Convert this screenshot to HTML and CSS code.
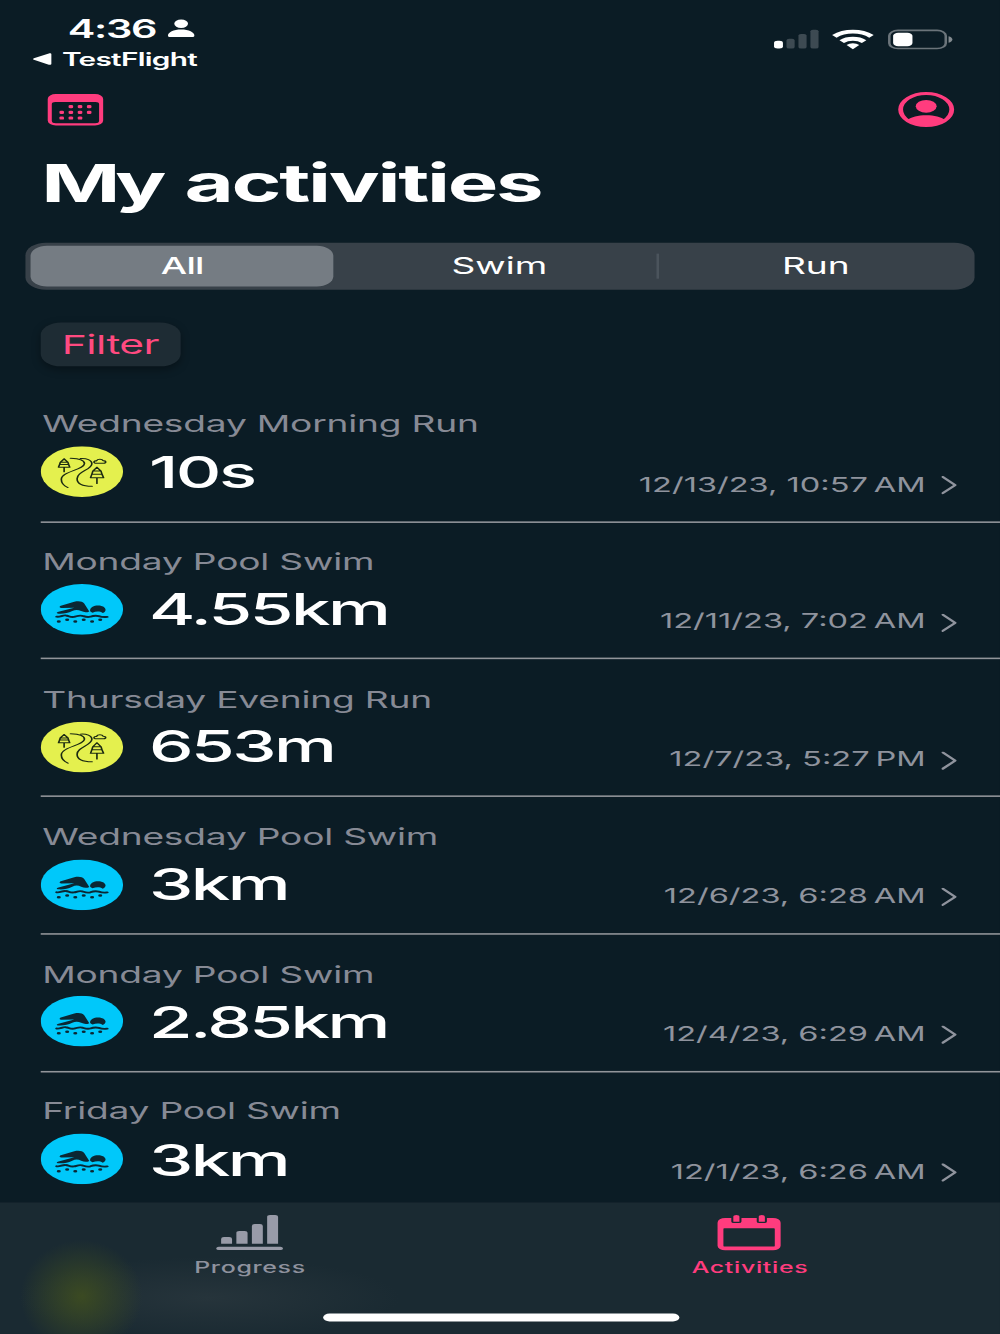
FILE: index.html
```html
<!DOCTYPE html>
<html lang="en">
<head>
    <meta charset="UTF-8">
    <meta name="viewport" content="width=device-width, initial-scale=1.0">
    <title>My activities</title>
    <link rel="stylesheet" href="styles.css">
</head>
<body>
    <!-- Shared activity icons -->
    <svg class="sprites" width="0" height="0">
        <symbol id="run" viewBox="0 0 32.4 32.4">
            <circle cx="16.2" cy="16.2" r="16.2" fill="#e4f04e"/>
            <g fill="none" stroke="#1b2a12" stroke-width=".65" stroke-linecap="round" stroke-linejoin="round">
                <path d="M9.2 8.1 7.7 10.3h3L9.2 8.1M7.7 10.3l-.3 1.4h3.6l-.3-1.4M7.4 11.7 7 13.4h4.4L11 11.7M9.2 13.4v2.9"/>
                <path d="M22.1 13.4 20.5 15.9h3.2L22.1 13.4M20.5 15.9l-.4 2h4l-.4-2M20.1 17.9l-.5 2.2h5.1l-.6-2.2M22.1 20.1v3.7"/>
                <path d="M11.7 7.7C14.5 7.9 17.3 8.7 17.2 11.2 17 15 8.1 16.2 8.1 21.2c0 2.3 1.2 4.2 2.6 5.2"/>
                <path d="M15.6 7.9c2.3-.3 4.6.9 4.5 3.4-.2 3.7-5.8 5-5.8 9.5 0 3.6 2.6 4.8 5.9 4.8"/>
                <path d="M21.3 10.8c-.8-.6-.2-1.6.6-1.4.5-1.5 2.3-1.3 2.6-.2 1.4 0 1.3 1.6.2 1.7z"/>
            </g>
        </symbol>
        <symbol id="swim" viewBox="0 0 32.4 32.4">
            <circle cx="16.2" cy="16.2" r="16.2" fill="#00c8fa"/>
            <g fill="#0b2733">
                <path d="M7.9 13.9 13.2 11.3c1.7-.6 3.2-.3 3.9 1.1l2 5.1c-1.1.9-2.1.6-3.2-.2-1.2-.9-2.3-.9-3.5 0-1.7 1.4-3.5 1.9-5.4 1.7-1-.2-.8-.8 0-1.2l6.2-2.6-4.8.1c-1 0-1.3-.9-.5-1.4z"/>
                <path d="M19.4 16.9c.1-2 1.5-3.1 3.1-3.1s2.9 1 3 2.6c0 1-.4 1.8-1.1 2.2-1.2-1.3-2.7-1.2-4-.2-.6-.4-1-.9-1-1.5z"/>
                <circle cx="7.1" cy="24" r=".8"/><circle cx="10.4" cy="22.9" r=".8"/>
                <circle cx="13.6" cy="24" r=".8"/><circle cx="16.9" cy="22.9" r=".8"/>
                <circle cx="20.2" cy="24" r=".8"/><circle cx="23.4" cy="22.9" r=".8"/>
            </g>
            <path d="M6.3 20.9c1.4.4 2.3-1.2 3.6-.8 1.2.3 1.7 1.3 3.2.9 1.2-.4 1.8-1.2 3.2-.7 1.2.6 1.9 1.2 3.2.6 1.2-.7 2-1 3.3-.4 1.1.6 1.9.8 3.3.5" fill="none" stroke="#0b2733" stroke-width="1.2" stroke-linecap="round"/>
        </symbol>
        <symbol id="chevron" viewBox="0 0 6 12">
            <path d="M.5.6 5.4 5.8 .5 11" fill="none" stroke="#8f939d" stroke-width="1.2" stroke-linecap="round" stroke-linejoin="round"/>
        </symbol>
    </svg>

    <div class="phone">
        <div class="status">
            <div class="status-left">
                <div class="time">
                    <span>4:36</span>
                    <svg width="10.4" height="11.2" viewBox="0 0 10.4 11.2" fill="#fff">
                        <circle cx="5.2" cy="2.2" r="2.7"/>
                        <path d="M0 9.7C0 7.5 2.2 5.8 5.2 5.8s5.2 1.7 5.2 3.9c0 .6-.3 1-1 1H1c-.7 0-1-.4-1-1z"/>
                    </svg>
                </div>
                <div class="back">
                    <svg width="7.2" height="7.4" viewBox="0 0 7.2 7.4" fill="#fff"><path d="M.3 3.2 6.2.1c.6-.3 1 0 1 .5v6.2c0 .5-.4.8-1 .5L.3 4.2c-.4-.3-.4-.7 0-1z"/></svg>
                    <span>TestFlight</span>
                </div>
            </div>
            <div class="status-right">
                <svg width="17.6" height="12" viewBox="0 0 17.6 12">
                    <rect x=".2" y="7" width="3.5" height="5" rx="1.4" fill="#fff"/>
                    <g fill="#3d4a52">
                        <rect x="5.1" y="5.8" width="3.2" height="6.2" rx="1"/>
                        <rect x="9.8" y="2.7" width="3.2" height="9.3" rx="1"/>
                        <rect x="14.5" y="0" width="3.2" height="12" rx="1"/>
                    </g>
                </svg>
                <svg width="16.4" height="12.6" viewBox="0 0 16.4 12.6">
                    <g fill="none" stroke="#fff" stroke-width="2.5">
                        <path d="M.9 4.2a10.4 10.4 0 0 1 14.6 0"/>
                        <path d="M3.8 7.6a6.2 6.2 0 0 1 8.8 0"/>
                    </g>
                    <path d="M5.7 9.7a3.6 3.6 0 0 1 5 0L8.2 12.4z" fill="#fff"/>
                </svg>
                <svg width="25.4" height="12.6" viewBox="0 0 25.4 12.6">
                    <rect x=".5" y=".4" width="22.2" height="11.6" rx="3.4" fill="none" stroke="#6b747a"/>
                    <rect x="2" y="1.9" width="7.6" height="8.6" rx="2" fill="#fff"/>
                    <path d="M23.8 4.1c.9.3 1.5 1.1 1.5 2.1s-.6 1.8-1.5 2.1z" fill="#848b90"/>
                </svg>
            </div>
        </div>

        <div class="toolbar">
            <svg width="21.8" height="20.2" viewBox="0.25 0 21.8 20.2" fill="#ff3c7e">
                <path fill-rule="evenodd" d="M3.2 0h15.4a3.2 3.2 0 0 1 3.2 3.2V17a3.2 3.2 0 0 1-3.2 3.2H3.2A3.2 3.2 0 0 1 0 17V3.2A3.2 3.2 0 0 1 3.2 0zM3 5.1a1.4 1.4 0 0 0-1.4 1.4v10.6A1.6 1.6 0 0 0 3.2 18.7h15.4a1.6 1.6 0 0 0 1.6-1.6V6.5a1.4 1.4 0 0 0-1.4-1.4z"/>
                <rect x="8.2" y="7.1" width="1.8" height="2" rx=".6"/><rect x="11.8" y="7.1" width="1.8" height="2" rx=".6"/><rect x="15.4" y="7.1" width="1.8" height="2" rx=".6"/>
                <rect x="4.6" y="10.8" width="1.8" height="2" rx=".6"/><rect x="8.2" y="10.8" width="1.8" height="2" rx=".6"/><rect x="11.8" y="10.8" width="1.8" height="2" rx=".6"/><rect x="15.4" y="10.8" width="1.8" height="2" rx=".6"/>
                <rect x="4.6" y="14.4" width="1.8" height="2" rx=".6"/><rect x="8.2" y="14.4" width="1.8" height="2" rx=".6"/><rect x="11.8" y="14.4" width="1.8" height="2" rx=".6"/>
            </svg>
            <svg width="22.2" height="22.4" viewBox="0 0 22.2 22.4">
                <ellipse cx="11" cy="11" rx="10.05" ry="10.25" fill="none" stroke="#ff3c7e" stroke-width="1.9"/>
                <circle cx="11" cy="8.9" r="4.1" fill="#ff3c7e"/>
                <path d="M3.5 17.7c1.6-1.9 4.3-3.1 7.5-3.1s5.9 1.2 7.5 3.1c-1.8 2.4-4.5 3.8-7.5 3.8s-5.7-1.4-7.5-3.8z" fill="#ff3c7e"/>
            </svg>
        </div>

        <h1>My activities</h1>

        <div class="segments">
            <div class="segment active">All</div>
            <div class="segment">Swim</div>
            <div class="segment last">Run</div>
        </div>

        <button class="filter">Filter</button>

        <div class="list">
            <div class="row">
                <div class="name">Wednesday Morning Run</div>
                <div class="info">
                    <svg class="badge"><use href="#run"/></svg>
                    <span class="value">10s</span>
                    <span class="date">12/13/23, 10:57&#8239;AM</span>
                    <svg class="chevron"><use href="#chevron"/></svg>
                </div>
            </div>
            <div class="row">
                <div class="name">Monday Pool Swim</div>
                <div class="info">
                    <svg class="badge"><use href="#swim"/></svg>
                    <span class="value">4.55km</span>
                    <span class="date">12/11/23, 7:02&#8239;AM</span>
                    <svg class="chevron"><use href="#chevron"/></svg>
                </div>
            </div>
            <div class="row">
                <div class="name">Thursday Evening Run</div>
                <div class="info">
                    <svg class="badge"><use href="#run"/></svg>
                    <span class="value">653m</span>
                    <span class="date">12/7/23, 5:27&#8239;PM</span>
                    <svg class="chevron"><use href="#chevron"/></svg>
                </div>
            </div>
            <div class="row">
                <div class="name">Wednesday Pool Swim</div>
                <div class="info">
                    <svg class="badge"><use href="#swim"/></svg>
                    <span class="value">3km</span>
                    <span class="date">12/6/23, 6:28&#8239;AM</span>
                    <svg class="chevron"><use href="#chevron"/></svg>
                </div>
            </div>
            <div class="row">
                <div class="name">Monday Pool Swim</div>
                <div class="info">
                    <svg class="badge"><use href="#swim"/></svg>
                    <span class="value">2.85km</span>
                    <span class="date">12/4/23, 6:29&#8239;AM</span>
                    <svg class="chevron"><use href="#chevron"/></svg>
                </div>
            </div>
            <div class="row">
                <div class="name">Friday Pool Swim</div>
                <div class="info">
                    <svg class="badge"><use href="#swim"/></svg>
                    <span class="value">3km</span>
                    <span class="date">12/1/23, 6:26&#8239;AM</span>
                    <svg class="chevron"><use href="#chevron"/></svg>
                </div>
            </div>
        </div>

        <div class="tabbar">
            <div class="tab">
                <svg width="26.2" height="22.4" viewBox="0 0 26.2 22.4" fill="#989ba8">
                    <path d="M1.9 18.4v-3.1q0-1.2 1.1-1.2h2.1q1.1 0 1.1 1.2v3.1zM7.9 18.4v-7q0-1.2 1.1-1.2h2.2q1.1 0 1.1 1.2v7zM14 18.4V7q0-1.2 1.1-1.2h2.1q1.1 0 1.1 1.2v11.4zM20 18.4V1.2Q20 0 21.1 0h2.1q1.1 0 1.1 1.2v17.2z"/>
                    <rect x="0" y="20.3" width="26.2" height="2.1" rx="1"/>
                </svg>
                <span>Progress</span>
            </div>
            <div class="tab selected">
                <svg width="24.8" height="22.6" viewBox="0 0 24.8 22.6" fill="#ff3c7e">
                    <path fill-rule="evenodd" d="M3 1.9h2.4v2.2q0 1.1 1 1.1h2q1 0 1-1.1V1.9h6v2.2q0 1.1 1 1.1h2q1 0 1-1.1V1.9h2.4a3 3 0 0 1 3 3v14.7a3 3 0 0 1-3 3H3a3 3 0 0 1-3-3V4.9a3 3 0 0 1 3-3zM2.7 8.4a.4.4 0 0 0-.4.4v10.8q0 .6.6.6h19q.6 0 .6-.6V8.8a.4.4 0 0 0-.4-.4z"/>
                    <path d="M6.2 4.4V1.2Q6.2 0 7.4 0t1.2 1.2v3.2zM16.2 4.4V1.2q0-1.2 1.2-1.2t1.2 1.2v3.2z"/>
                </svg>
                <span>Activities</span>
            </div>
            <div class="home"></div>
        </div>
    </div>
</body>
</html>
```

FILE: styles.css
```css
* {
    margin: 0;
    padding: 0;
    box-sizing: border-box;
}

body {
    width: 1000px;
    height: 1334px;
    overflow: hidden;
    background: #0b1c25;
}

.sprites {
    position: absolute;
}

/* 393 x 852pt screen stretched over the whole window */
.phone {
    display: flex;
    flex-direction: column;
    position: relative;
    width: 393px;
    height: 852px;
    overflow: hidden;
    background: #0b1c25;
    color: #fff;
    font-family: Inter, "Liberation Sans", sans-serif;
    transform: scale(2.5445, 1.5657);
    transform-origin: 0 0;
}

svg {
    display: block;
    flex: none;
    overflow: visible;
}

/* Status bar */
.status {
    display: flex;
    justify-content: space-between;
    height: 58.8px;
    padding: 8.2px 18.6px 0 13px;
}

.time {
    display: flex;
    align-items: center;
    gap: 5px;
    padding-left: 13.6px;
    font-size: 16.3px;
    font-weight: 600;
    letter-spacing: -0.5px;
    line-height: 20px;
}

.back {
    display: flex;
    align-items: center;
    gap: 4.2px;
    margin-top: 2.9px;
    font-size: 11.7px;
    font-weight: 600;
    letter-spacing: -0.28px;
    line-height: 14px;
}

.status-right {
    display: flex;
    align-items: center;
    gap: 5.5px;
    height: 12.6px;
    margin-top: 10.5px;
}

/* Header */
.toolbar {
    display: flex;
    justify-content: space-between;
    align-items: center;
    height: 22.4px;
    padding: 0 18px 0 18.7px;
}

h1 {
    margin: 15.4px 0 0 16.2px;
    font-size: 33.4px;
    font-weight: 700;
    letter-spacing: -0.9px;
    word-spacing: 1px;
    line-height: 40px;
}

h1::first-letter {
    letter-spacing: -2px;
}

.segments {
    display: flex;
    height: 29.4px;
    margin: 18.9px 10.2px 0;
    border-radius: 8px;
    background: #384149;
}

.segment {
    display: flex;
    align-items: center;
    justify-content: center;
    position: relative;
    flex: 1;
    font-size: 14.6px;
    font-weight: 400;
}

.segment.active {
    flex: none;
    width: 118.9px;
    margin: 1.9px 3px 1.9px 2px;
    border-radius: 6.5px;
    background: #757c83;
    font-weight: 450;
    letter-spacing: -0.3px;
}

.segment.last::before {
    content: "";
    position: absolute;
    left: -0.4px;
    width: 1px;
    height: 15.4px;
    background: #4b545c;
}

.filter {
    width: 54.4px;
    height: 28.4px;
    margin: 21.2px 0 0 16.2px;
    border: none;
    border-radius: 8px;
    background: #1e2c34;
    box-shadow: 0 2px 4px rgba(0, 0, 0, 0.35);
    color: #ff4a80;
    font-family: inherit;
    font-size: 16.7px;
    letter-spacing: -0.2px;
}

/* Activity list */
.list {
    margin-top: 11.3px;
    padding-left: 16.2px;
}

.row {
    height: 87.83px;
    padding: 16.6px 16.7px 0 0;
    border-bottom: 1px solid #92959a;
}

.row:last-child {
    border-bottom: none;
}

.name {
    margin-left: 0.4px;
    color: #878a95;
    font-size: 14.6px;
    letter-spacing: -0.08px;
    line-height: 18px;
}

.info {
    display: flex;
    align-items: flex-end;
    height: 32.4px;
    margin-top: 4.8px;
}

.badge {
    width: 32.4px;
    height: 32.4px;
}

.value {
    margin-left: 10px;
    font-size: 27.8px;
    font-weight: 450;
    letter-spacing: -1px;
    line-height: 32px;
}

.date {
    margin-left: auto;
    color: #8f939d;
    font-size: 12.8px;
    line-height: 16px;
}

.chevron {
    width: 6px;
    height: 12px;
    margin: 0 0 1.6px 6.5px;
}

/* Tab bar */
.tabbar {
    display: flex;
    position: absolute;
    left: 0;
    right: 0;
    bottom: 0;
    height: 84px;
    padding-top: 8px;
    background:
        radial-gradient(24px 36px at 32px 60px, #3b4a22, rgba(59, 74, 34, 0.5) 50%, rgba(59, 74, 34, 0)),
        radial-gradient(75px 26px at 82px 61px, #26343b, rgba(38, 52, 59, 0)),
        #1a2a32;
}

.tab {
    display: flex;
    flex-direction: column;
    align-items: center;
    gap: 5.7px;
    flex: 1;
    color: #8f929e;
    font-size: 9.8px;
    font-weight: 500;
    letter-spacing: 0.26px;
    line-height: 12px;
}

.tab.selected {
    color: #ff3c7e;
}

.home {
    position: absolute;
    left: 126.5px;
    bottom: 7.9px;
    width: 140.4px;
    height: 5.5px;
    border-radius: 3px;
    background: #fff;
}
```
